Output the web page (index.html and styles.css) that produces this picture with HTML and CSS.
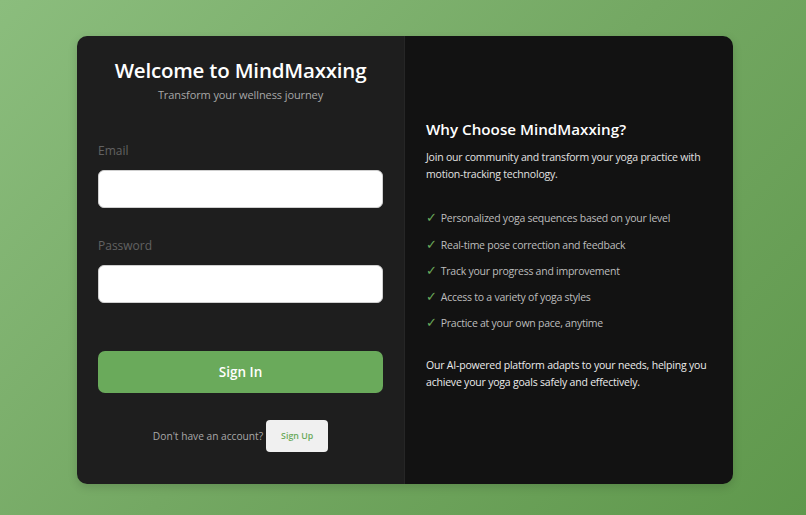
FILE: index.html
```html
<!DOCTYPE html>
<html lang="en">
<head>
<meta charset="utf-8">
<title>MindMaxxing</title>
<link rel="stylesheet" href="styles.css">
</head>
<body>
<div class="page">
  <div class="card">
    <section class="left">
      <h1 class="title">Welcome to MindMaxxing</h1>
      <p class="subtitle">Transform your wellness journey</p>
      <form class="form">
        <label class="label">Email</label>
        <input class="input" type="email">
        <label class="label label-pw">Password</label>
        <input class="input" type="password">
        <button type="button" class="signin">Sign In</button>
      </form>
      <div class="signup-row">
        <span class="signup-text">Don't have an account?</span>
        <button type="button" class="signup">Sign Up</button>
      </div>
    </section>
    <section class="right">
      <h2 class="why">Why Choose MindMaxxing?</h2>
      <p class="intro">Join our community and transform your yoga practice with motion-tracking technology.</p>
      <ul class="features">
        <li><span class="check">✓</span>Personalized yoga sequences based on your level</li>
        <li><span class="check">✓</span>Real-time pose correction and feedback</li>
        <li><span class="check">✓</span>Track your progress and improvement</li>
        <li><span class="check">✓</span>Access to a variety of yoga styles</li>
        <li><span class="check">✓</span>Practice at your own pace, anytime</li>
      </ul>
      <p class="outro">Our AI-powered platform adapts to your needs, helping you achieve your yoga goals safely and effectively.</p>
    </section>
  </div>
</div>
</body>
</html>
```
FILE: styles.css
```css
* { box-sizing: border-box; }
html, body { margin: 0; padding: 0; }
body {
  font-family: "Open Sans", "Noto Sans", sans-serif;
  background: linear-gradient(135deg, #8bbd7d 0%, #74a863 50%, #5f984c 100%);
  width: 806px;
  height: 515px;
  overflow: hidden;
}
.page {
  padding: 36px 0 0 77px;
}
.card {
  width: 656px;
  height: 448px;
  display: flex;
  border-radius: 10px;
  overflow: hidden;
  box-shadow: 0 3px 10px rgba(0,0,0,0.15);
}
.left {
  width: 328px;
  background: #1e1e1e;
  padding: 20px 21px 0;
  border-right: 1px solid #262626;
}
.title {
  margin: 0;
  color: #fff;
  font-size: 20.5px;
  font-weight: 600;
  text-align: center;
  letter-spacing: -0.2px;
}
.subtitle {
  margin: 3px 0 0;
  color: #a8a8a8;
  font-size: 11px;
  letter-spacing: -0.1px;
  text-align: center;
}
.form {
  display: flex;
  flex-direction: column;
  margin-top: 40px;
}
.label {
  color: #626262;
  font-size: 12px;
  margin-bottom: 11px;
}
.label-pw { margin-top: 29px; }
.input {
  height: 38px;
  border: 1px solid #cfcfcf;
  border-radius: 6px;
  background: #fff;
  outline: none;
}
.signin {
  margin-top: 48px;
  height: 42px;
  border: none;
  border-radius: 7px;
  background: #6aaa5b;
  color: #fff;
  font-family: inherit;
  font-size: 13.5px;
  font-weight: 600;
}
.signup-row {
  margin-top: 27px;
  display: flex;
  align-items: center;
  justify-content: center;
  gap: 3px;
}
.signup-text {
  color: #a8a8a8;
  font-size: 10.2px;
}
.signup {
  width: 62px;
  height: 32px;
  border: none;
  border-radius: 4px;
  background: #f0f0f0;
  color: #6aaa5b;
  font-family: inherit;
  font-size: 8.8px;
  font-weight: 600;
}
.right {
  flex: 1;
  background: #121212;
  padding: 0 21px 10px;
  display: flex;
  flex-direction: column;
  justify-content: center;
}
.why {
  margin: 0;
  color: #fff;
  font-size: 15.2px;
  font-weight: 600;
}
.intro {
  margin: 10px 0 0;
  color: #e2e2e2;
  font-size: 10.5px;
  letter-spacing: -0.2px;
  line-height: 17px;
}
.features {
  list-style: none;
  margin: 26px 0 0;
  padding: 0;
}
.features li {
  color: #bdbdbd;
  font-size: 10.5px;
  letter-spacing: -0.25px;
  height: 26.25px;
  line-height: 17px;
}
.check {
  color: #6aaa5b;
  margin-right: 4px;
  font-size: 12.5px;
}
.outro {
  margin: 16px 0 0;
  color: #ececec;
  font-size: 10.5px;
  letter-spacing: -0.2px;
  line-height: 17px;
}
```
